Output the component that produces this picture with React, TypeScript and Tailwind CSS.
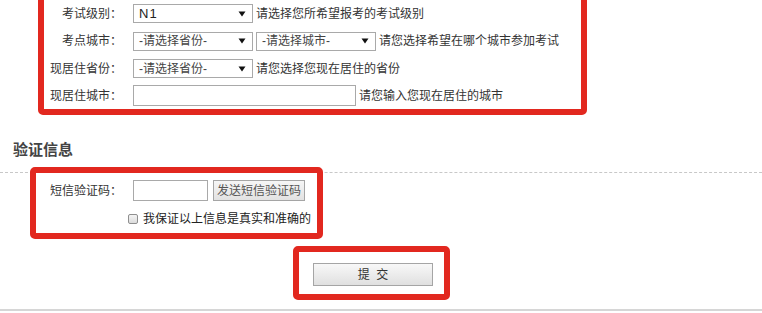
import React from "react";

const font = { fontFamily: '"Liberation Sans", "Noto Sans CJK SC", sans-serif' };

function Arrow() {
  return (
    <svg width="8" height="6" viewBox="0 0 8 6" className="shrink-0">
      <path d="M0.5 0.5 L7.5 0.5 L4 5.5 Z" fill="#111" />
    </svg>
  );
}

function FakeSelect({ text, width, dark }: { text: string; width: string; dark?: boolean }) {
  return (
    <div
      className={`${width} h-[19px] border border-[#a9a9a9] bg-white flex items-center justify-between pl-[5px] pr-[6px] box-border`}
    >
      <span className={dark ? "text-[13px] text-[#222] tracking-[1px]" : "text-[12px] text-[#444]"}>{text}</span>
      <Arrow />
    </div>
  );
}

function Row({ label, h, children }: { label: string; h: string; children: React.ReactNode }) {
  return (
    <div className={`flex items-center ${h}`}>
      <div className="w-[78px] text-right text-[12px] text-[#333] whitespace-nowrap">{label}</div>
      <div className="ml-[11px] flex items-center">{children}</div>
    </div>
  );
}

export default function App() {
  return (
    <div className="w-[762px] h-[313px] bg-white overflow-hidden flex flex-col" style={font}>
      {/* Box 1 */}
      <div className="ml-[38px] mt-[-6px] w-[549px] h-[121px] border-[6px] border-[#e2281f] rounded-[5px] box-border flex flex-col shrink-0">
        <Row label="考试级别：" h="h-[27px]">
          <FakeSelect text="N1" width="w-[120px]" dark />
          <span className="ml-[3px] text-[12px] text-[#333] whitespace-nowrap">请选择您所希望报考的考试级别</span>
        </Row>
        <Row label="考点城市：" h="h-[28px]">
          <FakeSelect text="-请选择省份-" width="w-[120px]" />
          <div className="ml-[3px]">
            <FakeSelect text="-请选择城市-" width="w-[120px]" />
          </div>
          <span className="ml-[3px] text-[12px] text-[#333] whitespace-nowrap">请您选择希望在哪个城市参加考试</span>
        </Row>
        <Row label="现居住省份：" h="h-[27px]">
          <FakeSelect text="-请选择省份-" width="w-[120px]" />
          <span className="ml-[3px] text-[12px] text-[#333] whitespace-nowrap">请您选择您现在居住的省份</span>
        </Row>
        <Row label="现居住城市：" h="h-[27px]">
          <div className="w-[223px] h-[21px] border border-[#a9a9a9] bg-white box-border" />
          <span className="ml-[3px] text-[12px] text-[#333] whitespace-nowrap">请您输入您现在居住的城市</span>
        </Row>
      </div>

      {/* Section title */}
      <div className="mt-[25px] h-[33px] border-b border-dashed border-[#c8c8c8] box-border pl-[13px] shrink-0">
        <div className="text-[15px] leading-[20px] font-bold text-[#444]">验证信息</div>
      </div>

      {/* Box 2 */}
      <div className="ml-[30px] mt-[-6px] w-[293px] h-[72px] border-[6px] border-[#e2281f] rounded-[5px] box-border flex flex-col shrink-0">
        <div className="flex items-center mt-[7px] h-[21px]">
          <div className="w-[86px] text-right text-[12px] text-[#333] whitespace-nowrap">短信验证码：</div>
          <div className="ml-[11px] w-[75px] h-[21px] border border-[#a9a9a9] bg-white box-border" />
          <button className="ml-[5px] w-[92px] h-[21px] border border-[#a5a5a5] bg-gradient-to-b from-[#f6f6f6] to-[#e2e2e2] box-border text-[12px] text-[#555] flex items-center justify-center whitespace-nowrap">
            发送短信验证码
          </button>
        </div>
        <div className="flex items-center mt-[8px] h-[20px] pl-[92px]">
          <div className="w-[10px] h-[10px] border border-[#8f8f8f] rounded-[2px] bg-gradient-to-b from-[#f4f4f4] to-[#dcdcdc] box-border" />
          <span className="ml-[5px] text-[12px] text-[#222] whitespace-nowrap">我保证以上信息是真实和准确的</span>
        </div>
      </div>

      {/* Box 3 */}
      <div className="ml-[293px] mt-[7px] w-[157px] h-[54px] border-[6px] border-[#e2281f] rounded-[5px] box-border flex flex-col shrink-0">
        <button className="ml-[14px] mt-[11px] w-[120px] h-[23px] border border-[#a5a5a5] bg-gradient-to-b from-[#f8f8f8] to-[#e0e0e0] box-border text-[12px] text-[#333] flex items-center justify-center whitespace-pre">
          提  交
        </button>
      </div>

      <div className="mt-[9px] h-[2px] bg-[#d6d6d6] shrink-0" />
    </div>
  );
}
